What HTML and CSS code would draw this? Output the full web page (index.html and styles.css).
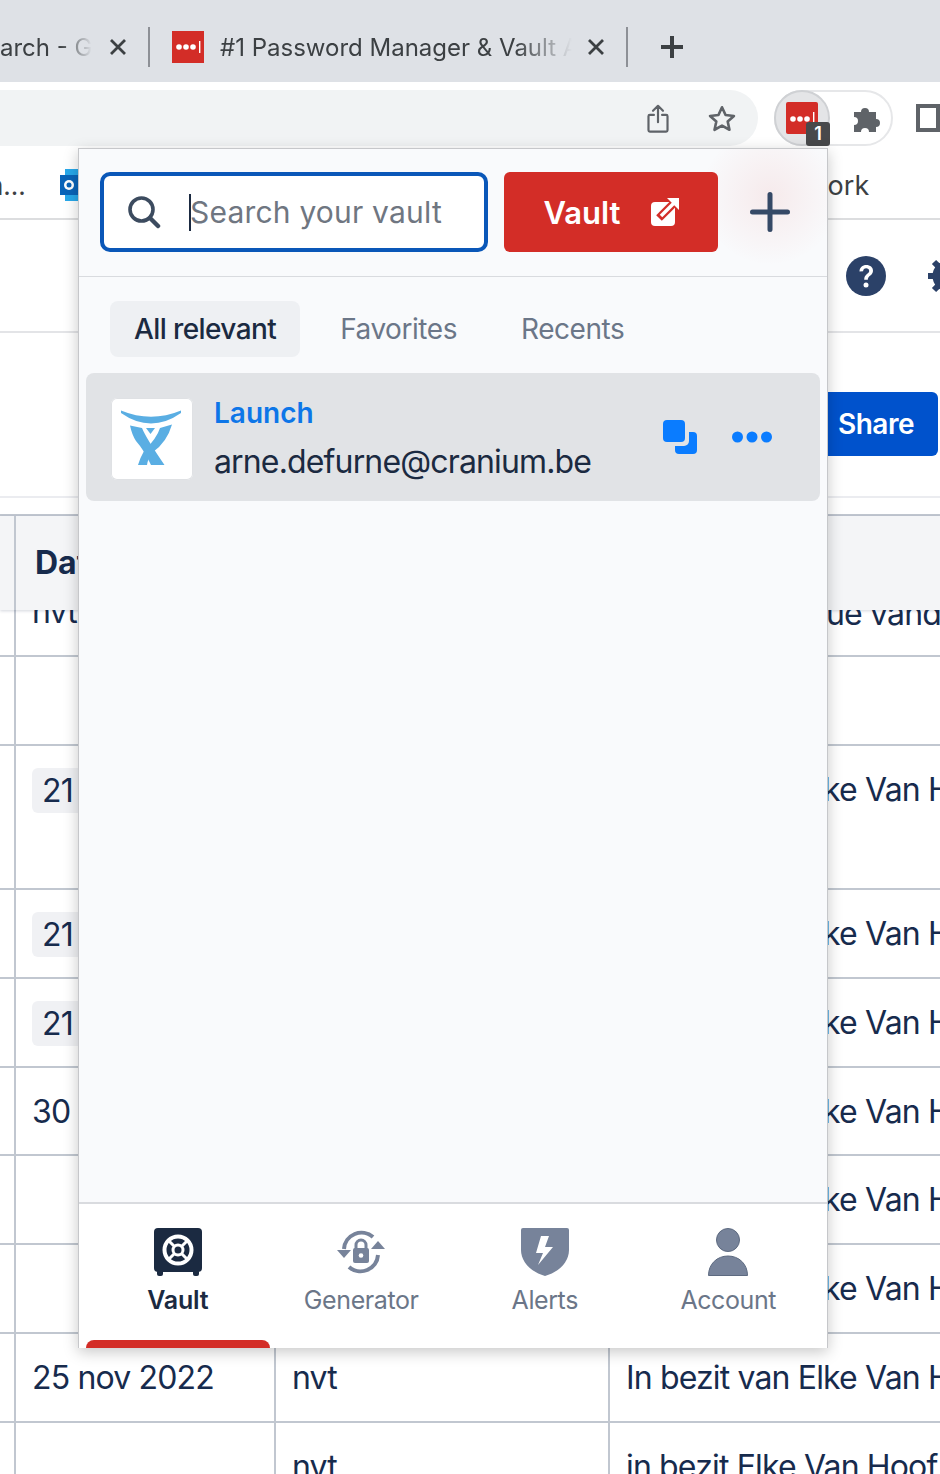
FILE: index.html
```html
<!DOCTYPE html>
<html lang="en">
<head>
<meta charset="UTF-8" />
<meta name="viewport" content="width=device-width, initial-scale=1" />
<title>Password vault popup</title>
<link rel="stylesheet" href="styles.css">
</head>
<body>

<!-- browser chrome -->
<div class="tabstrip">
  <div class="tab tab-first">
    <span class="tab-title tab-title-first">arch - G</span>
    <svg class="tab-close" width="18" height="18" viewBox="0 0 18 18"><path d="M2 2l14 14M16 2L2 16" /></svg>
  </div>
  <span class="tab-sep"></span>
  <div class="tab tab-second">
    <svg class="favicon" width="32" height="32" viewBox="0 0 32 32">
      <rect width="32" height="32" fill="#d32d27" />
      <circle cx="7" cy="16" r="2.8" fill="#fff" /><circle cx="14" cy="16" r="2.8" fill="#fff" /><circle cx="21" cy="16" r="2.8" fill="#fff" />
      <rect x="27" y="10" width="1.4" height="12" fill="#fff" />
    </svg>
    <span class="tab-title tab-title-second">#1 Password Manager &amp; Vault App</span>
    <svg class="tab-close" width="18" height="18" viewBox="0 0 18 18"><path d="M2 2l14 14M16 2L2 16" /></svg>
  </div>
  <span class="tab-sep"></span>
  <svg class="new-tab" width="24" height="24" viewBox="0 0 24 24"><path d="M12 1v22M1 12h22" /></svg>
</div>

<div class="toolbar">
  <div class="omnibox">
    <svg width="22" height="29" viewBox="0 0 24 32" fill="none" stroke="#5f6368" stroke-width="2.4" stroke-linecap="round" stroke-linejoin="round">
      <path d="M12 20V2M6.5 7.5L12 2l5.5 5.5M7.5 12H3a1.5 1.5 0 0 0-1.500 1.500V29A1.500 1.500 0 0 0 3 30.500h18a1.500 1.500 0 0 0 1.500-1.500V13.500A1.500 1.500 0 0 0 21 12h-4.500" />
    </svg>
    <svg width="28" height="28" viewBox="0 0 30 28" fill="none" stroke="#5f6368" stroke-width="2.800" stroke-linejoin="round">
      <path d="M15 2.500l3.800 8.300 9 1-6.700 6 1.900 8.800L15 22.100l-8 4.500 1.900-8.800-6.700-6 9-1z" />
    </svg>
  </div>
  <div class="ext-pill">
    <div class="ext-active">
      <svg width="32" height="32" viewBox="0 0 32 32">
        <rect width="32" height="32" rx="2" fill="#d32d27" />
        <circle cx="7" cy="17" r="2.800" fill="#fff" /><circle cx="14" cy="17" r="2.800" fill="#fff" /><circle cx="21" cy="17" r="2.800" fill="#fff" />
        <rect x="27" y="10" width="1.400" height="13" fill="#fff" />
      </svg>
      <span class="ext-badge">1</span>
    </div>
    <svg class="puzzle" width="30" height="30" viewBox="0 0 30 30">
      <path fill="#5f6368" d="M1 9h7a4 4 0 1 1 8 0h7v7a4 4 0 1 1 0 8v5h-7a4 4 0 1 0-8 0H1v-7a4 4 0 1 0 0-8z" />
    </svg>
  </div>
  <div class="side-panel"></div>
</div>

<div class="bookmarks">
  <span class="bm-cut">n...</span>
  <svg class="bm-outlook" width="20" height="32" viewBox="0 0 20 32">
    <rect x="5" y="0" width="15" height="32" fill="#28a8ea" />
    <rect x="0" y="6" width="18" height="20" fill="#0a64b8" />
    <circle cx="9" cy="16" r="5" fill="#fff" /><circle cx="9" cy="16" r="2.500" fill="#0a64b8" />
  </svg>
  <span class="bm-work">work</span>
</div>

<!-- page behind the popup -->
<div class="page-head">
  <svg class="help" width="40" height="40" viewBox="0 0 40 40">
    <circle cx="20" cy="20" r="20" fill="#2b4168" />
    <path d="M13.500 15.500c0-4 3-6.500 6.800-6.500 3.900 0 6.700 2.300 6.700 5.700 0 4.800-5.200 4.900-5.200 9h-3.600c0-5.900 5-6 5-8.800 0-1.500-1.300-2.600-3-2.600-1.800 0-3 1.200-3.100 3z" fill="#fff" />
    <circle cx="20" cy="29" r="2.500" fill="#fff" />
  </svg>
  <svg class="gear" width="40" height="40" viewBox="0 0 40 40">
    <circle cx="20" cy="20" r="12" fill="none" stroke="#2b4168" stroke-width="7" />
    <path d="M20 0v40M0 20h40M6 6l28 28M34 6L6 34" stroke="#2b4168" stroke-width="6" />
    <circle cx="20" cy="20" r="8" fill="#fff" />
  </svg>
</div>
<div class="page-actions">
  <button class="share">Share</button>
</div>

<div class="table">
  <div class="table-head">
    <div class="cell"></div>
    <div class="cell head-cell">Datum</div>
  </div>
  <div class="table-view">
    <div class="rows">
      <div class="row row-first">
        <div class="cell"></div><div class="cell cut-cell">nvt</div><div class="cell"></div><div class="cell frag">ue vand</div>
      </div>
      <div class="row">
        <div class="cell"></div><div class="cell"></div><div class="cell"></div><div class="cell"></div>
      </div>
      <div class="row row-tall">
        <div class="cell"></div><div class="cell"><span class="pill">21 nov 2022</span></div><div class="cell"></div><div class="cell">In bezit van Elke Van Hoof</div>
      </div>
      <div class="row">
        <div class="cell"></div><div class="cell"><span class="pill">21 nov 2022</span></div><div class="cell"></div><div class="cell">In bezit van Elke Van Hoof</div>
      </div>
      <div class="row">
        <div class="cell"></div><div class="cell"><span class="pill">21 nov 2022</span></div><div class="cell"></div><div class="cell">In bezit van Elke Van Hoof</div>
      </div>
      <div class="row row-short">
        <div class="cell"></div><div class="cell">30 nov 2022</div><div class="cell"></div><div class="cell">In bezit van Elke Van Hoof</div>
      </div>
      <div class="row">
        <div class="cell"></div><div class="cell"></div><div class="cell"></div><div class="cell">In bezit van Elke Van Hoof</div>
      </div>
      <div class="row">
        <div class="cell"></div><div class="cell"></div><div class="cell"></div><div class="cell">In bezit van Elke Van Hoof</div>
      </div>
      <div class="row">
        <div class="cell"></div><div class="cell">25 nov 2022</div><div class="cell">nvt</div><div class="cell">In bezit van Elke Van Hoof</div>
      </div>
      <div class="row row-last">
        <div class="cell"></div><div class="cell"></div><div class="cell">nvt</div><div class="cell">in bezit Elke Van Hoof</div>
      </div>
    </div>
  </div>
</div>

<!-- extension popup -->
<div class="popup">
  <div class="popup-top">
    <div class="search">
      <svg width="34" height="34" viewBox="0 0 34 34" fill="none" stroke="#3c4b5f" stroke-width="3.600" stroke-linecap="round">
        <circle cx="14.500" cy="14.500" r="11.500" /><path d="M23 23l8 8" stroke-width="4.500" />
      </svg>
      <span class="caret"></span>
      <span class="placeholder">Search your vault</span>
    </div>
    <button class="vault-btn">
      Vault
      <svg width="28" height="28" viewBox="0 0 28 28">
        <rect x="0" y="4" width="24" height="24" rx="4" fill="#fff" />
        <path d="M8 20L28 0" stroke="#d32d27" stroke-width="8" />
        <path d="M10 18L24 4" stroke="#fff" stroke-width="3.600" />
        <path fill="#fff" d="M16 0h12v12z" />
      </svg>
    </button>
    <button class="add-btn">
      <svg width="40" height="40" viewBox="0 0 40 40"><path d="M20 2.500v35M2.500 20h35" /></svg>
    </button>
  </div>

  <div class="filters">
    <span class="filter filter-on">All relevant</span>
    <span class="filter">Favorites</span>
    <span class="filter">Recents</span>
  </div>

  <div class="list">
    <div class="item">
      <div class="item-logo">
        <svg width="82" height="82" viewBox="0 0 82 82" fill="#5aaee3">
          <path d="M10 12.500Q40 25 70 12.500L70 15Q40 36 10 15Z" />
          <path d="M19 27.500L31 30Q35 40 53.500 67H40Q33 52 25 43Q21 37 19 27.500Z" />
          <path d="M61 26.500L49 30Q46 40 33 53Q29 60 27 67H36Q37 60 42 54Q56 44 61 26.500Z" />
          <path d="M35 30h9l-4.500 6z" />
        </svg>
      </div>
      <div class="item-text">
        <span class="item-name">Launch</span>
        <span class="item-user">arne.defurne@cranium.be</span>
      </div>
      <div class="item-actions">
        <svg width="34" height="34" viewBox="0 0 34 34" fill="#0a7cff">
          <rect x="12" y="12" width="22" height="22" rx="4" />
          <rect x="0" y="0" width="26" height="26" rx="5" fill="#e1e3e6" />
          <rect x="0" y="0" width="22" height="22" rx="4" />
        </svg>
        <svg width="40" height="12" viewBox="0 0 40 12" fill="#0a7cff">
          <circle cx="5.500" cy="6" r="5.500" /><circle cx="20" cy="6" r="5.500" /><circle cx="34.500" cy="6" r="5.500" />
        </svg>
      </div>
    </div>
  </div>

  <div class="nav">
    <div class="nav-item nav-on">
      <svg width="48" height="48" viewBox="0 0 48 48">
        <rect x="0" y="0" width="48" height="44" rx="4" fill="#1b2a41" />
        <rect x="3" y="42" width="6" height="6" rx="2" fill="#1b2a41" /><rect x="39" y="42" width="6" height="6" rx="2" fill="#1b2a41" />
        <circle cx="24" cy="22" r="13.500" fill="none" stroke="#fff" stroke-width="4" />
        <circle cx="24" cy="22" r="5" fill="none" stroke="#fff" stroke-width="3" />
        <path d="M14.500 12.500l5.500 5.500M33.500 12.500L28 18M14.500 31.500l5.500-5.500M33.500 31.500L28 26" stroke="#fff" stroke-width="3" />
      </svg>
      <span>Vault</span>
      <i class="nav-mark"></i>
    </div>
    <div class="nav-item">
      <svg width="48" height="48" viewBox="0 0 48 48" fill="#77839a">
        <path d="M7 21A17.500 17.500 0 0 1 36 9" fill="none" stroke="#77839a" stroke-width="4" />
        <path d="M41 27A17.500 17.500 0 0 1 12 39" fill="none" stroke="#77839a" stroke-width="4" />
        <path d="M0 22h14l-7 8zM34 21l7-8 7 8z" />
        <rect x="16" y="20" width="16" height="15" rx="2" />
        <path d="M19 21v-4a5 5 0 0 1 10 0v4" fill="none" stroke="#77839a" stroke-width="3" />
        <circle cx="24" cy="27.500" r="2.300" fill="#fff" />
      </svg>
      <span>Generator</span>
    </div>
    <div class="nav-item">
      <svg width="48" height="48" viewBox="0 0 48 48">
        <path fill="#77839a" d="M2 0h44a2 2 0 0 1 2 2v20c0 12-10 22-24 26C10 44 0 34 0 22V2a2 2 0 0 1 2-2z" />
        <path fill="#fff" d="M28 8H20l-5 17h7l-5 12 15-18h-8z" />
      </svg>
      <span>Alerts</span>
    </div>
    <div class="nav-item">
      <svg width="42" height="48" viewBox="0 0 42 48" fill="#77839a" stroke="#5d6a80" stroke-width="1">
        <circle cx="21" cy="12" r="11.500" />
        <path d="M1.500 47.500C1.500 36 10 28 21 28s19.500 8 19.500 19.500z" />
      </svg>
      <span>Account</span>
    </div>
  </div>
</div>

</body>
</html>
```

FILE: styles.css
```css
html, body {
  margin: 0;
  height: 1474px;
  overflow: hidden;
  background: #fff;
}
body {
  position: relative;
  font-family: Inter, "Liberation Sans", sans-serif;
  color: #172b4d;
}
button {
  font-family: inherit;
  border: none;
  cursor: pointer;
}

/* browser chrome */
.tabstrip {
  height: 82px;
  background: #dee1e6;
  display: flex;
  align-items: center;
  color: #3c4043;
  font-size: 24px;
  overflow: hidden;
}
.tab {
  display: flex;
  align-items: center;
  flex: none;
  margin-top: 12px;
}
.tab-first {
  width: 148px;
}
.tab-second {
  width: 454px;
  padding-left: 22px;
}
.tab-title {
  white-space: nowrap;
  overflow: hidden;
}
.tab-title-first {
  width: 92px;
  -webkit-mask-image: linear-gradient(to right, #000 66%, transparent 100%);
  mask-image: linear-gradient(to right, #000 66%, transparent 100%);
}
.favicon {
  flex: none;
  margin-right: 16px;
}
.tab-title-second {
  width: 352px;
  -webkit-mask-image: linear-gradient(to right, #000 84%, transparent 100%);
  mask-image: linear-gradient(to right, #000 84%, transparent 100%);
}
.tab-close {
  flex: none;
  fill: none;
  stroke: #3c4043;
  stroke-width: 2.800;
}
.tab-first .tab-close {
  margin-left: 17px;
}
.tab-second .tab-close {
  margin-left: 15px;
}
.tab-sep {
  flex: none;
  width: 2px;
  height: 40px;
  margin-top: 12px;
  background: #8d9096;
}
.new-tab {
  flex: none;
  margin: 12px 0 0 32px;
  fill: none;
  stroke: #3c4043;
  stroke-width: 4;
}

.toolbar {
  height: 66px;
  display: flex;
  align-items: flex-start;
  padding-top: 8px;
  box-sizing: border-box;
}
.omnibox {
  width: 758px;
  height: 56px;
  flex: none;
  background: #f1f3f4;
  border-radius: 0 28px 28px 0;
  display: flex;
  align-items: center;
  justify-content: flex-end;
  gap: 39px;
  padding-right: 22px;
  box-sizing: border-box;
}
.ext-pill {
  width: 119px;
  height: 56px;
  flex: none;
  margin-left: 16px;
  border: 2px solid #e6e7e9;
  border-radius: 28px;
  box-sizing: border-box;
  display: flex;
  align-items: center;
  position: relative;
}
.ext-active {
  width: 56px;
  height: 56px;
  margin-left: -2px;
  flex: none;
  border-radius: 50%;
  background: #e4e5e7;
  border: 2px solid #cfd1d4;
  box-sizing: border-box;
  display: flex;
  align-items: center;
  justify-content: center;
  position: relative;
}
.ext-badge {
  position: absolute;
  left: 30px;
  top: 30px;
  width: 24px;
  height: 24px;
  background: #48494b;
  border-radius: 3px;
  color: #fff;
  font-size: 18px;
  font-weight: 600;
  line-height: 24px;
  text-align: center;
}
.puzzle {
  margin-left: 23px;
}
.side-panel {
  width: 24px;
  height: 28px;
  flex: none;
  margin: 14px 0 0 23px;
  border: 4px solid #5f6368;
  box-sizing: border-box;
}

.bookmarks {
  height: 72px;
  border-bottom: 2px solid #dcdddf;
  box-sizing: border-box;
  display: flex;
  align-items: center;
  font-size: 26px;
  color: #3c4043;
  padding-top: 4px;
}
.bm-cut {
  width: 58px;
  margin-left: -12px;
  flex: none;
}
.bm-outlook {
  flex: none;
  margin-left: 14px;
}
.bm-work {
  margin-left: 726px;
  font-size: 27px;
  flex: none;
}

/* page behind the popup */
.page-head {
  height: 113px;
  border-bottom: 2px solid #e3e4e7;
  box-sizing: border-box;
  display: flex;
  justify-content: flex-end;
  align-items: center;
  gap: 42px;
  margin-right: -28px;
}
.help, .gear {
  flex: none;
}
.page-actions {
  height: 165px;
  border-bottom: 2px solid #ebecf0;
  box-sizing: border-box;
  display: flex;
  justify-content: flex-end;
  padding: 59px 2px 0 0;
}
.share {
  width: 130px;
  height: 64px;
  background: #0052cc;
  color: #fff;
  font-size: 28px;
  font-weight: 600;
  letter-spacing: -0.5px;
  border-radius: 6px;
  padding: 0 0 0 6px;
}

.table {
  margin-top: 16px;
  border-top: 2px solid #c1c7d0;
}
.table-head, .row {
  display: grid;
  grid-template-columns: 15px 260px 334px 1fr;
}
.table-head {
  height: 94px;
  background: #f4f5f7;
  box-shadow: 0 1px 3px rgba(9, 30, 66, 0.18);
  position: relative;
}
.table-view {
  height: 900px;
  overflow: hidden;
}
.rows {
  margin-top: -41px;
}
.cell {
  border-left: 2px solid #c1c7d0;
  margin-left: -1px;
  padding: 23px 0 0 16px;
  font-size: 32px;
  letter-spacing: -0.85px;
  line-height: 42px;
  white-space: nowrap;
}
.cell:first-child {
  border-left: none;
}
.head-cell {
  font-weight: 700;
  letter-spacing: 0;
  padding: 26px 0 0 19px;
  grid-column: 2 / 5;
}
.row {
  height: 89px;
  border-bottom: 2px solid #c1c7d0;
  box-sizing: border-box;
}
.row-first {
  height: 88px;
}
.row-tall {
  height: 144px;
}
.row-short {
  height: 88px;
}
.row-last {
  height: 100px;
  border-bottom: none;
}
.cut-cell {
  padding-top: 22px;
}
.frag {
  text-indent: 200px;
  padding-top: 24px;
}
.pill {
  display: inline-block;
  background: #f0f1f4;
  border-radius: 6px;
  padding: 0 10px;
  line-height: 45px;
  margin-top: -1px;
}

/* extension popup */
.popup {
  position: absolute;
  left: 78px;
  top: 148px;
  width: 750px;
  height: 1200px;
  box-sizing: border-box;
  border: 1px solid #c6c7ca;
  border-bottom: none;
  background: #f9fafc;
  box-shadow: 0 4px 14px rgba(0, 0, 0, 0.22);
  display: flex;
  flex-direction: column;
  overflow: hidden;
  color: #1b2a41;
}
.popup-top {
  height: 128px;
  box-sizing: border-box;
  border-bottom: 1px solid #d9dbdf;
  padding: 23px 0 0 21px;
  display: flex;
  align-items: flex-start;
  gap: 16px;
}
.search {
  width: 388px;
  height: 80px;
  flex: none;
  box-sizing: border-box;
  border: 4px solid #0a57b8;
  border-radius: 10px;
  background: #fff;
  display: flex;
  align-items: center;
  padding-left: 23px;
}
.caret {
  width: 2px;
  height: 37px;
  background: #1b2a41;
  margin-left: 28px;
  flex: none;
}
.placeholder {
  font-size: 30px;
  letter-spacing: 0.2px;
  color: #6f7681;
  margin-left: -1px;
  white-space: nowrap;
}
.vault-btn {
  width: 214px;
  height: 80px;
  flex: none;
  background: #d32d27;
  color: #fff;
  border-radius: 6px;
  font-size: 31px;
  font-weight: 600;
  display: flex;
  align-items: center;
  justify-content: center;
  gap: 30px;
}
.add-btn {
  width: 80px;
  height: 80px;
  margin-left: -4px;
  background: none;
  padding: 0;
  position: relative;
  display: flex;
  align-items: center;
  justify-content: center;
}
.add-btn::before {
  content: "";
  position: absolute;
  left: -30px;
  top: -46px;
  width: 140px;
  height: 140px;
  border-radius: 50%;
  background: radial-gradient(circle, rgba(211, 45, 39, 0.08), rgba(211, 45, 39, 0) 70%);
}
.add-btn svg {
  position: relative;
  fill: none;
  stroke: #354966;
  stroke-width: 5;
  stroke-linecap: round;
}

.filters {
  display: flex;
  padding: 24px 0 0 31px;
  gap: 16px;
  height: 56px;
}
.filter {
  font-size: 28px;
  letter-spacing: -0.45px;
  color: #6b7688;
  padding: 0 24px;
  height: 56px;
  line-height: 56px;
  border-radius: 8px;
  white-space: nowrap;
}
.filter-on {
  color: #1b2a41;
  font-weight: 500;
  letter-spacing: -0.6px;
  background: #eef0f3;
}

.list {
  flex: 1;
  padding: 16px 7px 0;
}
.item {
  height: 128px;
  background: #e1e3e6;
  border-radius: 8px;
  display: flex;
  align-items: center;
  padding-left: 25px;
}
.item-logo {
  width: 82px;
  height: 82px;
  flex: none;
  margin-top: 4px;
  background: #fff;
  border-radius: 6px;
  box-shadow: inset 0 0 0 1px #dfe1e4;
}
.item-text {
  display: flex;
  flex-direction: column;
  margin-left: 21px;
  padding-top: 2px;
  flex: 1;
  gap: 10px;
}
.item-name {
  font-size: 28px;
  font-weight: 600;
  color: #0d76e8;
  line-height: 38px;
}
.item-user {
  font-size: 32px;
  letter-spacing: -0.85px;
  line-height: 40px;
  white-space: nowrap;
}
.item-actions {
  display: flex;
  align-items: center;
  gap: 35px;
  padding-right: 48px;
}

.nav {
  height: 146px;
  flex: none;
  background: #fff;
  border-top: 2px solid #d9dbdf;
  box-sizing: border-box;
  padding: 0 7px;
  display: flex;
}
.nav-item {
  flex: 1;
  position: relative;
  display: flex;
  flex-direction: column;
  align-items: center;
  padding-top: 24px;
  font-size: 25px;
  letter-spacing: -0.4px;
  color: #6b7688;
}
.nav-item span {
  margin-top: 8px;
  line-height: 32px;
}
.nav-on {
  color: #1b2a41;
  font-weight: 600;
  letter-spacing: -0.2px;
}
.nav-mark {
  position: absolute;
  left: 0;
  right: 0;
  bottom: 0;
  height: 8px;
  background: #d32d27;
  border-radius: 8px 8px 0 0;
}
```
